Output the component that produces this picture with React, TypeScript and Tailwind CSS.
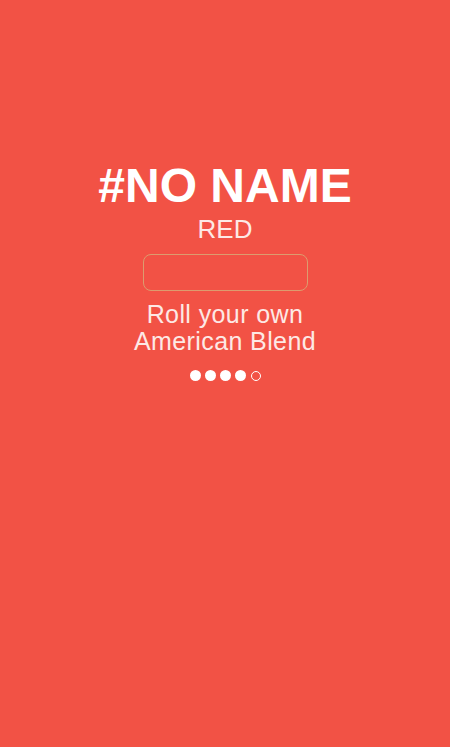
export default function App() {
  const dots = [true, true, true, true, false];

  return (
    <div
      className="flex min-h-[747px] w-full flex-col items-center bg-[#f25245] pt-[162px] text-white"
      style={{ fontFamily: '"Liberation Sans", Arial, sans-serif' }}
    >
      <h1 className="text-[48px] font-bold leading-none">#NO NAME</h1>
      <div className="mt-[6px] text-[26px] leading-none text-[#fde9e5]">RED</div>

      <div className="mt-[12px] h-[37px] w-[165px] rounded-[8px] border border-[#dc9c6e]" />

      <p className="mt-[10px] text-center text-[25px] leading-[27px] tracking-[0.4px] text-[#fde9e5]">
        Roll your own
        <br />
        American Blend
      </p>

      <div className="mt-[15px] flex items-center gap-[4px]">
        {dots.map((on, i) =>
          on ? (
            <span key={i} className="h-[11px] w-[11px] rounded-full bg-white" />
          ) : (
            <span key={i} className="ml-[1px] h-[10px] w-[10px] rounded-full border border-white" />
          )
        )}
      </div>
    </div>
  );
}
